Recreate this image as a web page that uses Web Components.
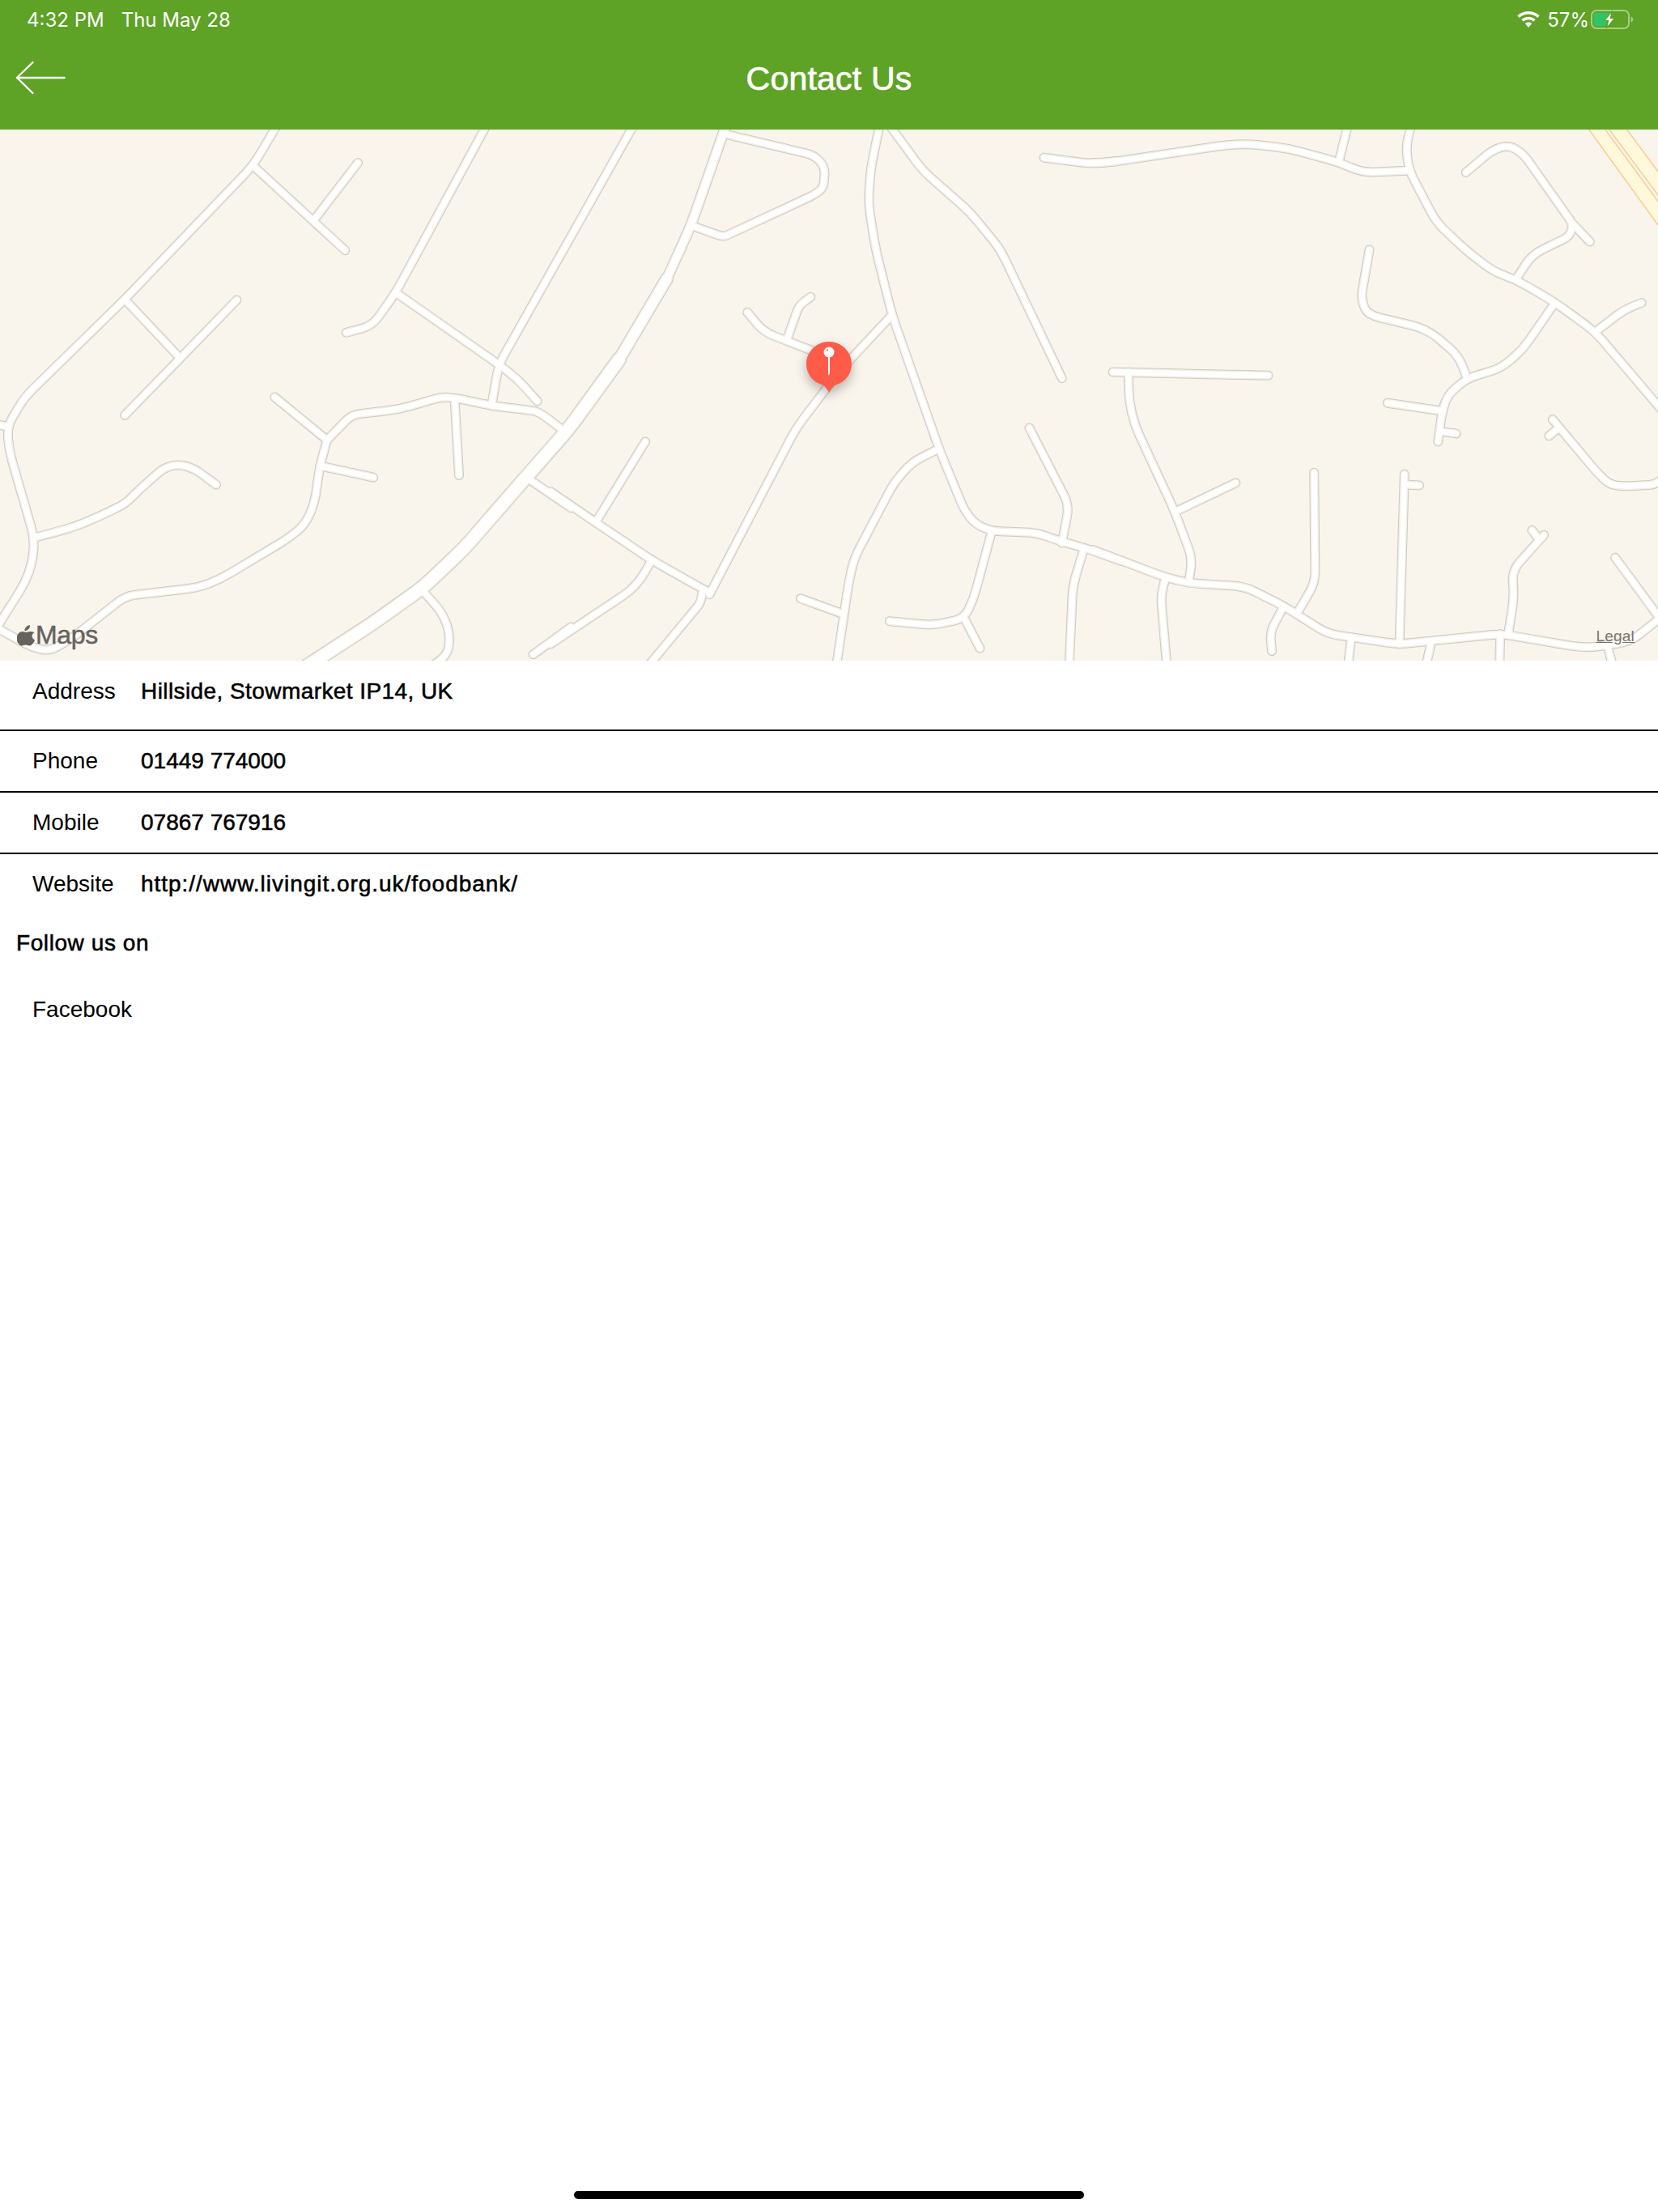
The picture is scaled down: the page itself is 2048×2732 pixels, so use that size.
<!DOCTYPE html>
<html lang="en">
<head>
<meta charset="utf-8">
<title>Contact Us</title>
<style>
    html, body { margin: 0; padding: 0; background: #fff; }
</style>
</head>
<body>
<contact-page>
    <status-bar slot="top" time="4:32 PM" date="Thu May 28" battery="57%"></status-bar>
    <nav-bar slot="top">Contact Us</nav-bar>
    <map-view slot="top"></map-view>
    <contact-row label="Address" tall track=".42px">Hillside, Stowmarket IP14, UK</contact-row>
    <contact-row label="Phone">01449 774000</contact-row>
    <contact-row label="Mobile">07867 767916</contact-row>
    <contact-row label="Website" last track=".97px">http://www.livingit.org.uk/foodbank/</contact-row>
    <follow-links>
        <span>Facebook</span>
    </follow-links>
</contact-page>

<script>
class ContactPage extends HTMLElement {
    constructor() {
        super();
        const shadow = this.attachShadow({ mode: 'open' });
        shadow.innerHTML = `
            <style>
                :host {
                    display: flex;
                    flex-direction: column;
                    width: 2048px;
                    height: 2732px;
                    background: #fff;
                    color: #000;
                    font-family: "Liberation Sans", Arial, sans-serif;
                    overflow: hidden;
                }
                .bar {
                    margin: auto auto 16px;
                    width: 630px;
                    height: 10px;
                    border-radius: 5px;
                    background: #000;
                }
            </style>
            <slot name="top"></slot>
            <slot></slot>
            <div class="bar"></div>
        `;
    }
}

class StatusBar extends HTMLElement {
    constructor() {
        super();
        const shadow = this.attachShadow({ mode: 'open' });
        shadow.innerHTML = `
            <style>
                :host {
                    display: flex;
                    justify-content: space-between;
                    align-items: center;
                    height: 48px;
                    padding: 0 30px 0 33px;
                    background: #5ea226;
                    color: #fff;
                    font-family: Inter, "Liberation Sans", sans-serif;
                    font-size: 24px;
                }
                .left { display: flex; gap: 21px; }
                .right { display: flex; align-items: center; }
                .pct { margin: 0 2px 0 9px; }
                svg { display: block; }
            </style>
            <div class="left"><span>${this.getAttribute('time')}</span><span>${this.getAttribute('date')}</span></div>
            <div class="right">
                <svg width="28" height="20" viewBox="0 0 28 20">
                    <path d="M14 0C8.7 0 3.9 2 .3 5.4L2.8 8C5.7 5.2 9.6 3.6 14 3.6S22.300 5.200 25.200 8L27.700 5.400C24.100 2 19.300 0 14 0Z" fill="#fff"/>
                    <path d="M14 6.700C10.600 6.700 7.600 8 5.300 10.200L7.800 12.800C9.400 11.300 11.600 10.300 14 10.300S18.600 11.300 20.200 12.800L22.700 10.200C20.400 8 17.400 6.700 14 6.700Z" fill="#fff"/>
                    <path d="M14 13.400C12.400 13.400 10.900 14 9.800 15.100L14 20L18.200 15.100C17.100 14 15.600 13.400 14 13.400Z" fill="#fff"/>
                </svg>
                <span class="pct">${this.getAttribute('battery')}</span>
                <svg width="53" height="24" viewBox="0 0 53 24">
                    <rect x="1" y="1" width="46" height="22" rx="6" fill="none" stroke="#fff" stroke-opacity=".45" stroke-width="2"/>
                    <path d="M49.500 8.500C51.300 9.200 52.300 10.500 52.300 12S51.300 14.800 49.500 15.500Z" fill="#fff" fill-opacity=".45"/>
                    <path d="M5.500 4H23.500L18 20H5.500A2 2 0 0 1 3.500 18V6A2 2 0 0 1 5.500 4Z" fill="#2fc566"/>
                    <path d="M26.500 1.500L16.800 13.500H21.700L19.300 22.800L29.500 10.300H24.300Z" fill="#fff" stroke="#5ea226" stroke-width="1.200"/>
                </svg>
            </div>
        `;
    }
}

class NavBar extends HTMLElement {
    constructor() {
        super();
        const shadow = this.attachShadow({ mode: 'open' });
        shadow.innerHTML = `
            <style>
                :host {
                    display: block;
                    position: relative;
                    height: 112px;
                    background: #5ea226;
                    color: #fff;
                }
                .title {
                    height: 100%;
                    display: flex;
                    justify-content: center;
                    align-items: center;
                    padding-bottom: 13px;
                    box-sizing: border-box;
                    font-size: 41px;
                    letter-spacing: .2px;
                    -webkit-text-stroke: .7px #fff;
                }
                svg { position: absolute; left: 19px; top: 27px; }
            </style>
            <svg width="63" height="42" viewBox="0 0 63 42" fill="none" stroke="#fff" stroke-width="2.400" stroke-linecap="round" stroke-linejoin="round">
                <path d="M2 21H60.500M21.500 2L2 21L21.500 40"/>
            </svg>
            <div class="title"><slot></slot></div>
        `;
    }
}

// road outlines traced per map tile: [tile, width, [x, y, x, y, ...]]
const TILES = { a: 0, b: 680, c: 1350 };
const ROADS = [
    ['a', 0, [765,-10, 700,105, 345,495, 68,780, 20,865, 25,935, 95,1190, 90,1260, 70,1320, -5,1445]],
    ['a', 0, [-10,860, 20,865]],
    ['a', 0, [95,1190, 200,1160, 270,1130, 348,1090, 385,1050, 455,985, 497,975, 540,990, 598,1035]],
    ['a', 0, [700,105, 865,265, 955,352]],
    ['a', 0, [990,97, 870,262]],
    ['a', 0, [345,495, 490,657]],
    ['a', 0, [655,497, 345,833]],
    ['a', 0, [1345,-10, 1095,475, 1030,572, 958,592]],
    ['a', 0, [1095,475, 1380,685, 1430,725, 1487,792]],
    ['a', 0, [1752,-10, 1380,685, 1360,805]],
    ['a', 0, [760,780, 905,905]],
    ['a', 0, [905,905, 965,840, 985,830, 1105,815, 1220,780, 1260,782, 1360,805, 1480,820, 1500,830, 1560,878]],
    ['a', 0, [905,905, 885,980, 870,1090, 845,1150, 800,1190, 610,1310, 550,1335, 360,1358, 335,1370, 190,1490, 135,1520, 90,1510, -5,1455]],
    ['a', 0, [885,980, 1033,1014]],
    ['a', 0, [1258,785, 1270,1008]],
    ['a', 0, [1170,1345, 1225,1410, 1245,1470, 1240,1530, 1180,1575]],
    ['a', 0, [1465,1020, 1580,1103]],
    ['b', 0, [0,1055, 125,1145, 280,1255, 440,1350]],
    ['a', 0, [1475,1530, 1580,1450]],
    ['b', 0, [0,1500, 220,1345, 250,1310, 280,1255]],
    ['b', 0, [125,1145, 262,910]],
    ['b', 0, [490,15, 730,75, 760,110, 755,170, 730,190, 485,310, 470,310, 390,280]],
    ['b', 0, [440,1355, 640,950, 680,870, 770,745, 830,670, 945,540]],
    ['b', 0, [910,-10, 885,120, 880,220, 900,350, 945,540, 1075,930, 1145,1110, 1175,1150, 1220,1170, 1345,1175, 1410,1200, 1480,1220, 1580,1258]],
    ['b', 0, [940,-10, 1030,120, 1160,240, 1245,350, 1415,725]],
    ['b', 0, [545,533, 590,590, 725,645]],
    ['b', 0, [720,488, 688,512, 655,610]],
    ['b', 0, [1075,930, 1000,970, 950,1030, 840,1250, 825,1320, 790,1570]],
    ['b', 0, [805,1410, 692,1367]],
    ['b', 0, [1220,1175, 1170,1370, 1145,1425, 1060,1445, 938,1433]],
    ['b', 0, [1145,1425, 1188,1512]],
    ['b', 0, [1325,870, 1435,1095, 1415,1205]],
    ['b', 0, [1475,1225, 1445,1330, 1435,1570]],
    ['b', 0, [420,1350, 415,1380, 265,1570]],
    ['b', 0, [1365,82, 1500,100, 1568,92]],
    ['c', 0, [0,97, 50,95, 370,45, 430,42, 540,55, 680,95, 745,125, 870,120]],
    ['c', 0, [705,-10, 680,95]],
    ['c', 0, [880,-10, 866,50, 875,120, 950,270, 1030,350, 1110,415, 1170,437, 1280,505, 1390,590, 1580,825]],
    ['c', 0, [1170,437, 1215,365, 1320,310, 1328,275, 1190,70, 1150,45, 1105,60, 1032,125]],
    ['c', 0, [1328,275, 1375,327]],
    ['c', 0, [1275,510, 1190,640, 1130,695, 1035,725, 980,775, 965,830, 955,910]],
    ['c', 0, [765,350, 742,490, 755,530, 780,545, 900,575, 940,595, 1012,660, 1035,725]],
    ['c', 0, [815,797, 965,820]],
    ['c', 0, [960,880, 1005,886]],
    ['c', 0, [1390,590, 1470,525, 1518,505]],
    ['c', 0, [55,707, 485,717]],
    ['c', 0, [98,707, 100,790, 115,860, 225,1110, 275,1250, 265,1320]],
    ['c', 0, [232,1112, 395,1030]],
    ['c', 0, [612,1000, 615,1320, 565,1410]],
    ['c', 0, [525,1395, 490,1465, 495,1520]],
    ['c', 0, [862,1005, 848,1500]],
    ['c', 0, [865,1035, 903,1037]],
    ['c', 0, [1272,845, 1395,1000, 1430,1035, 1470,1040, 1555,1035, 1580,1015]],
    ['c', 0, [1262,893, 1290,868]],
    ['c', 0, [1215,1168, 1235,1195]],
    ['c', 0, [1248,1182, 1160,1285, 1165,1365, 1150,1465]],
    ['c', 0, [1445,1248, 1565,1420]],
    ['c', 0, [0,1225, 200,1305, 265,1322, 420,1332, 530,1390, 650,1470, 845,1500, 1130,1470, 1350,1510, 1420,1505, 1490,1490, 1580,1415]],
    ['c', 0, [200,1310, 188,1360, 205,1570]],
    ['c', 0, [715,1480, 705,1570]],
    ['c', 0, [935,1500, 920,1570]],
    ['c', 0, [1127,1470, 1125,1570]],
    ['c', 0, [1425,1510, 1440,1570]],
    // main road, narrows in steps toward the top
    ['a', 19, [840,1570, 1030,1440, 1170,1335, 1285,1220, 1450,1020, 1575,870, 1713,670]],
    ['a', 16.5, [1713,670, 1845,435]],
    ['a', 14, [1845,435, 1911,282, 2008,-10]]
];

function roadPath(tile, pts) {
    const out = [];
    for (let i = 0; i < pts.length; i += 2) {
        out.push([pts[i] / 2.24 + TILES[tile], pts[i + 1] / 2.36]);
    }
    let d = `M${out[0][0].toFixed(1)} ${out[0][1].toFixed(1)}`;
    for (let i = 1; i < out.length; i++) {
        const p = out[i];
        if (i === out.length - 1) {
            d += `L${p[0].toFixed(1)} ${p[1].toFixed(1)}`;
            continue;
        }
        const a = out[i - 1], b = out[i + 1];
        const la = Math.hypot(p[0] - a[0], p[1] - a[1]);
        const lb = Math.hypot(b[0] - p[0], b[1] - p[1]);
        const r = Math.min(14, la / 2, lb / 2);
        const s = [p[0] + (a[0] - p[0]) * r / la, p[1] + (a[1] - p[1]) * r / la];
        const e = [p[0] + (b[0] - p[0]) * r / lb, p[1] + (b[1] - p[1]) * r / lb];
        d += `L${s[0].toFixed(1)} ${s[1].toFixed(1)}Q${p[0].toFixed(1)} ${p[1].toFixed(1)} ${e[0].toFixed(1)} ${e[1].toFixed(1)}`;
    }
    return d;
}

function highway(pts) {
    const xy = [];
    for (let i = 0; i < pts.length; i += 2) {
        xy.push(`${(pts[i] / 2.24 + 1350).toFixed(1)},${(pts[i + 1] / 2.36).toFixed(1)}`);
    }
    return `<polygon points="${xy.join(' ')}" fill="#fff8da" stroke="#f9cc92" stroke-width="1.500"/>`;
}

class MapView extends HTMLElement {
    constructor() {
        super();
        const shadow = this.attachShadow({ mode: 'open' });
        const layer = (color, extra) => ROADS.map(([tile, w, pts]) =>
            `<path d="${roadPath(tile, pts)}" stroke="${color}" stroke-width="${(w || 12) + extra}"/>`).join('');
        shadow.innerHTML = `
            <style>
                :host {
                    display: block;
                    position: relative;
                    height: 656px;
                    background: #f9f5ec;
                    overflow: hidden;
                }
                svg.roads { display: block; }
                .pin { position: absolute; left: 984px; top: 258px; filter: drop-shadow(0 6px 7px rgba(0,0,0,.28)); }
                .brand {
                    position: absolute;
                    left: 21px;
                    top: 606px;
                    display: flex;
                    align-items: center;
                    gap: 1px;
                    color: #66635e;
                    font-size: 32px;
                    letter-spacing: -.3px;
                    -webkit-text-stroke: .5px #66635e;
                }
                .legal {
                    position: absolute;
                    right: 29px;
                    top: 615px;
                    color: #77746f;
                    font-size: 19px;
                    letter-spacing: .2px;
                    text-decoration: underline;
                }
            </style>
            <svg class="roads" width="2048" height="656" viewBox="0 0 2048 656" fill="none" stroke-linecap="round" stroke-linejoin="round">
                ${highway([1369,-5, 1414,-5, 1590,247, 1590,317])}
                ${highway([1425,-5, 1474,-5, 1590,160, 1590,228])}
                ${layer('#d0c9bd', 0)}
                ${layer('#f1eee9', -2)}
                ${layer('#fefefd', -5)}
            </svg>
            <svg class="pin" width="80" height="70" viewBox="0 0 80 70">
                <path d="M40 6C55.500 6 68 18.500 68 34C68 46.500 60 56.500 49 60C46 61 44 63 40 70C36 63 34 61 31 60C20 56.500 12 46.500 12 34C12 18.500 24.500 6 40 6Z" fill="#ff5b49" transform="translate(0 -2) scale(1 .985)"/>
                <circle cx="40" cy="17" r="6.500" fill="#fff"/>
                <circle cx="38" cy="14.500" r="1.100" fill="#ff5b49"/>
                <path d="M39 22H41V42L40 46L39 44Z" fill="#fff"/>
            </svg>
            <div class="brand">
                <svg width="22" height="26" viewBox="0 0 20 26" preserveAspectRatio="none"><path d="M14.500 0C14.700 1.900 14 3.700 12.900 5C11.800 6.300 10.200 7.200 8.600 7.100C8.400 5.300 9.200 3.500 10.200 2.300C11.300 1 13.100 .1 14.500 0ZM19.600 8.900C17.900 10 16.900 11.600 16.900 13.600C16.900 15.900 18.200 17.600 20 18.400C19.600 19.800 18.900 21.100 18.100 22.300C17 23.900 15.800 25.500 14 25.500C12.300 25.500 11.700 24.500 9.700 24.500C7.700 24.500 7.100 25.500 5.500 25.500C3.700 25.600 2.400 23.800 1.300 22.200C-.9 18.900-1.100 12.900 2 9.900C3.200 8.700 4.700 8 6.200 8C8 8 9.100 9 10.500 9C11.900 9 12.700 8 14.700 8C16.500 8 18.400 8.700 19.600 8.900Z" fill="#66635e"/></svg>
                <span>Maps</span>
            </div>
            <div class="legal">Legal</div>
        `;
    }
}

class ContactRow extends HTMLElement {
    constructor() {
        super();
        const shadow = this.attachShadow({ mode: 'open' });
        shadow.innerHTML = `
            <style>
                :host {
                    display: flex;
                    align-items: center;
                    box-sizing: border-box;
                    height: 76px;
                    padding-left: 40px;
                    border-bottom: 2px solid #000;
                    font-size: 28px;
                }
                :host([tall]) {
                    height: 87px;
                    align-items: flex-start;
                    padding-top: 22px;
                }
                :host([last]) {
                    border-bottom: 0;
                    height: 73px;
                }
                .label { width: 134px; }
                .value {
                    -webkit-text-stroke: .55px #000;
                    letter-spacing: ${this.getAttribute('track') || '0'};
                }
            </style>
            <span class="label">${this.getAttribute('label')}</span>
            <span class="value"><slot></slot></span>
        `;
    }
}

class FollowLinks extends HTMLElement {
    constructor() {
        super();
        const shadow = this.attachShadow({ mode: 'open' });
        shadow.innerHTML = `
            <style>
                :host {
                    display: flex;
                    flex-direction: column;
                    font-size: 28px;
                }
                h2 {
                    margin: 21px 0 0 20px;
                    font-size: inherit;
                    font-weight: normal;
                    line-height: 32px;
                    letter-spacing: .58px;
                    -webkit-text-stroke: .55px #000;
                }
                .links { margin: 50px 0 0 40px; line-height: 32px; }
            </style>
            <h2>Follow us on</h2>
            <div class="links"><slot></slot></div>
        `;
    }
}

customElements.define('contact-page', ContactPage);
customElements.define('status-bar', StatusBar);
customElements.define('nav-bar', NavBar);
customElements.define('map-view', MapView);
customElements.define('contact-row', ContactRow);
customElements.define('follow-links', FollowLinks);
</script>
</body>
</html>
